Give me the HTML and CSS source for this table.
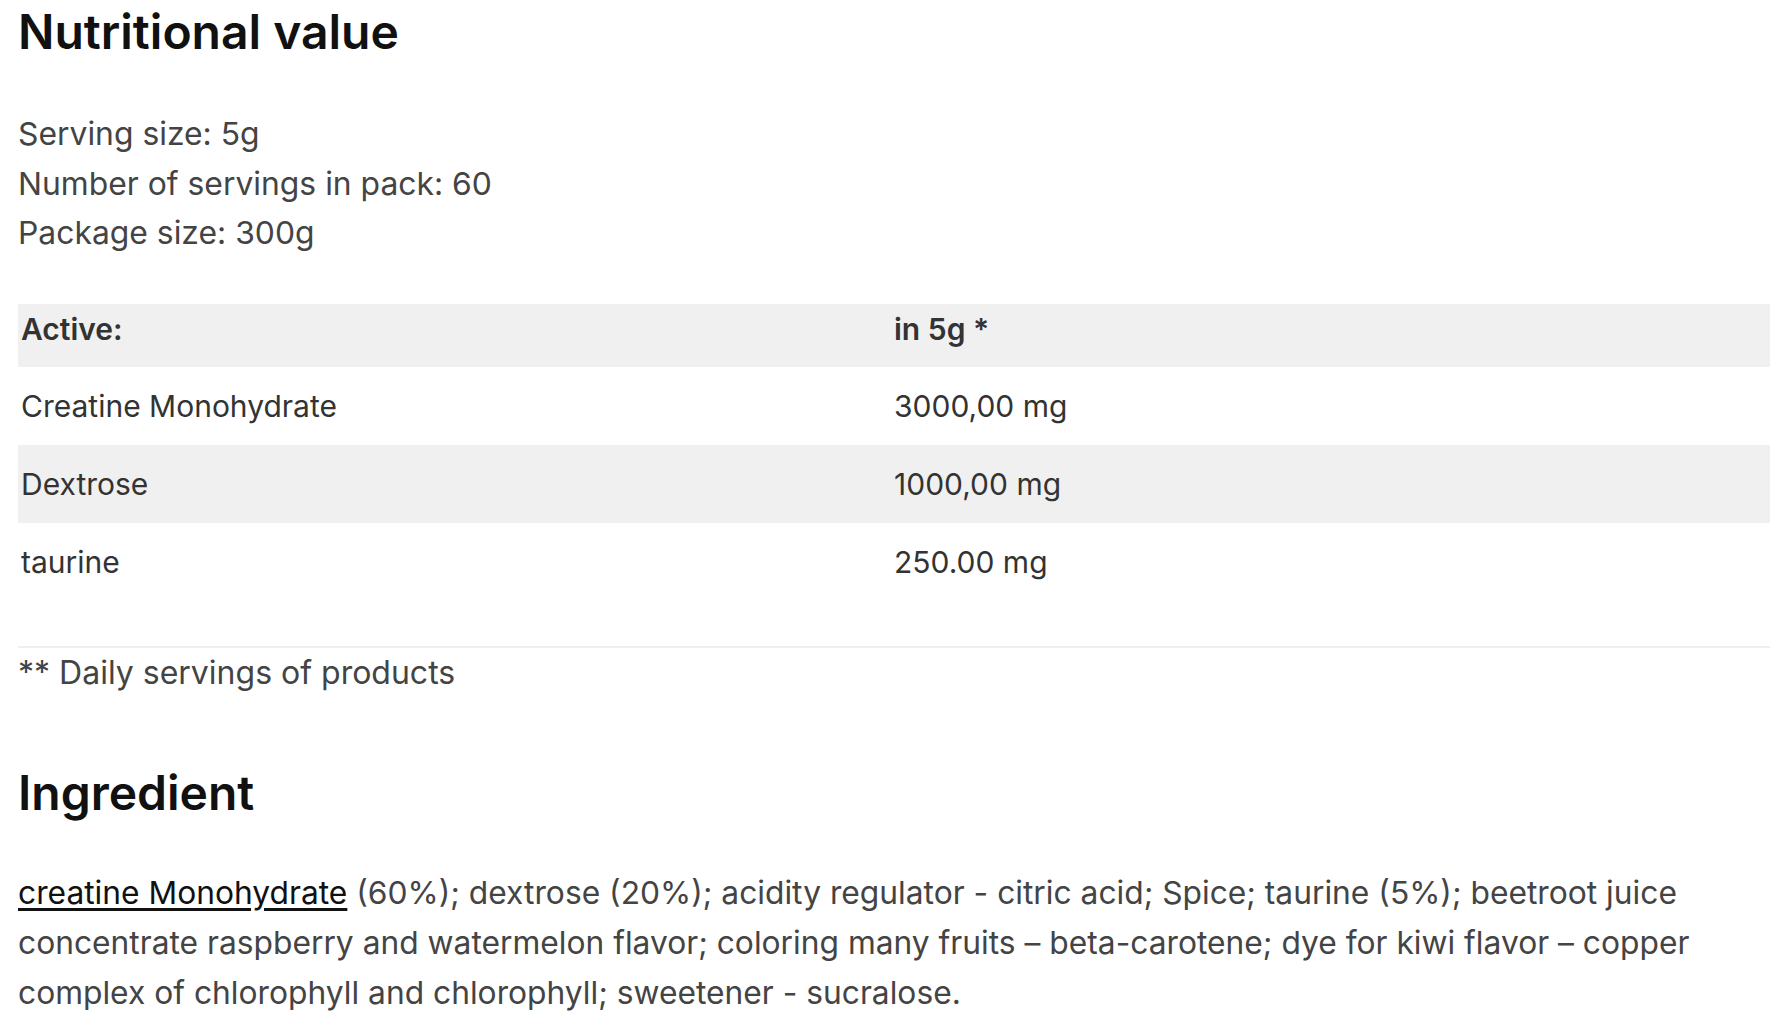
FILE: index.html
```html
<!DOCTYPE html>
<html lang="en">
<head>
    <meta charset="UTF-8">
    <meta name="viewport" content="width=device-width, initial-scale=1.0">
    <title>Nutritional value</title>
    <link rel="stylesheet" href="styles.css">
</head>
<body>
    <div class="product-info">
        <h2>Nutritional value</h2>
        <div class="serving-info">
            <p>Serving size: 5g</p>
            <p>Number of servings in pack: 60</p>
            <p>Package size: 300g</p>
        </div>
        <table class="nutrition-table">
            <colgroup>
                <col class="col-name">
                <col>
            </colgroup>
            <thead>
                <tr>
                    <th>Active:</th>
                    <th>in 5g *</th>
                </tr>
            </thead>
            <tbody>
                <tr>
                    <td>Creatine Monohydrate</td>
                    <td>3000,00 mg</td>
                </tr>
                <tr>
                    <td>Dextrose</td>
                    <td>1000,00 mg</td>
                </tr>
                <tr>
                    <td>taurine</td>
                    <td>250.00 mg</td>
                </tr>
            </tbody>
        </table>
        <p class="footnote">** Daily servings of products</p>

        <h2 class="ingredient-title">Ingredient</h2>
        <p class="ingredients"><a href="#">creatine Monohydrate</a> (60%); dextrose (20%); acidity regulator - citric acid; Spice; taurine (5%); beetroot juice concentrate raspberry and watermelon flavor; coloring many fruits – beta-carotene; dye for kiwi flavor – copper complex of chlorophyll and chlorophyll; sweetener - sucralose.</p>
    </div>
</body>
</html>
```

FILE: styles.css
```css
body {
    font-family: Inter, "Noto Sans", sans-serif;
    background-color: #fff;
    color: #444;
    margin: 0;
    padding: 0;
}

.product-info {
    padding: 0 18px 0 18px;
    width: 1752px;
}

h2 {
    font-size: 48px;
    font-weight: 600;
    line-height: 58px;
    color: #111;
    margin: 3px 0 0 0;
}

.serving-info {
    margin-top: 48px;
}

.serving-info p {
    font-size: 31.85px;
    line-height: 49.5px;
    margin: 0;
}

.nutrition-table {
    width: 100%;
    border-collapse: collapse;
    margin-top: 46px;
    table-layout: fixed;
    font-size: 30px;
    color: #333;
}

.nutrition-table .col-name {
    width: 873px;
}

.nutrition-table th {
    text-align: left;
    font-weight: 600;
    line-height: 39px;
    padding: 6px 3px 18px 3px;
    background-color: #f0f0f0;
}

.nutrition-table td {
    line-height: 39px;
    padding: 20px 3px 19px 3px;
}

.nutrition-table tbody tr:nth-child(even) td {
    background-color: #f0f0f0;
}

.footnote {
    font-size: 32px;
    line-height: 38px;
    margin: 45px 0 0 0;
    padding-top: 6.5px;
    border-top: 2px solid #efefef;
}

.ingredient-title {
    margin-top: 71.5px;
}

.ingredients {
    font-size: 31.75px;
    line-height: 50px;
    margin: 46px 0 0 0;
}

.ingredients a {
    color: #111;
    text-decoration: underline;
    text-underline-offset: 4px;
}
```
